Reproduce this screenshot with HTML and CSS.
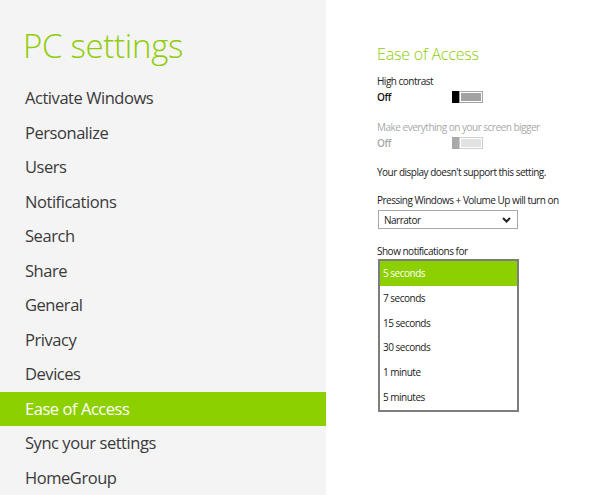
FILE: index.html
```html
<!DOCTYPE html>
<html>
<head>
<meta charset="utf-8">
<link rel="stylesheet" href="styles.css">
</head>
<body>
<div class="app">
  <aside class="side">
    <h1 class="title">PC settings</h1>
    <ul class="nav">
      <li>Activate Windows</li>
      <li>Personalize</li>
      <li>Users</li>
      <li>Notifications</li>
      <li>Search</li>
      <li>Share</li>
      <li>General</li>
      <li>Privacy</li>
      <li>Devices</li>
      <li class="active">Ease of Access</li>
      <li>Sync your settings</li>
      <li>HomeGroup</li>
    </ul>
  </aside>
  <main class="content">
    <h2 class="heading">Ease of Access</h2>
    <div class="label l-hc">High contrast</div>
    <div class="toggle-row">
      <span class="state">Off</span>
      <span class="toggle"><span class="thumb"></span><span class="track"></span></span>
    </div>
    <div class="label disabled l-big">Make everything on your screen bigger</div>
    <div class="toggle-row dis">
      <span class="state">Off</span>
      <span class="toggle"><span class="thumb"></span><span class="track"></span></span>
    </div>
    <div class="label l-note">Your display doesn't support this setting.</div>
    <div class="label l-press">Pressing Windows + Volume Up will turn on</div>
    <div class="select">
      <span>Narrator</span>
      <svg class="chev" width="9" height="6" viewBox="0 0 9 6"><polyline points="1,1 4.5,4.5 8,1" fill="none" stroke="#222" stroke-width="2"/></svg>
    </div>
    <div class="label l-show">Show notifications for</div>
    <ul class="list">
      <li class="sel">5 seconds</li>
      <li>7 seconds</li>
      <li>15 seconds</li>
      <li>30 seconds</li>
      <li>1 minute</li>
      <li>5 minutes</li>
    </ul>
  </main>
</div>
</body>
</html>
```
FILE: styles.css
```css
* { box-sizing: border-box; }
html, body { margin: 0; padding: 0; }
body {
  width: 600px;
  height: 495px;
  overflow: hidden;
  font-family: "Open Sans", "Noto Sans", sans-serif;
  background: #fff;
  color: #222;
}
.app { display: flex; height: 495px; }
.side {
  width: 326px;
  flex: none;
  background: #f4f4f4;
}
.title {
  margin: 0;
  padding: 26px 0 0 23px;
  height: 81px;
  font-size: 33px;
  font-weight: 300;
  line-height: 40px;
  color: #8ecd0a;
  letter-spacing: -0.3px;
}
.nav { list-style: none; margin: 0; padding: 0; }
.nav li {
  height: 34.5px;
  line-height: 34.5px;
  padding-left: 25px;
  font-size: 16.5px;
  font-weight: 400;
  color: #3a3a3a;
  letter-spacing: -0.45px;
}
.nav li.active { background: #8dd000; color: #fff; }
.content {
  flex: 1;
  padding: 44px 0 0 51px;
}
.heading {
  margin: 0;
  height: 20px;
  font-size: 16px;
  line-height: 20px;
  font-weight: 300;
  color: #8ecd0a;
  letter-spacing: -0.2px;
}
.label {
  font-size: 10px;
  line-height: 14px;
  height: 14px;
  color: #222;
  letter-spacing: -0.5px;
}
.label.disabled { color: #a8a8a8; }
.l-hc { margin-top: 10px; }
.l-big { margin-top: 16px; }
.l-note { margin-top: 15px; }
.l-press { margin-top: 14px; }
.l-show { margin-top: 16px; height: 13px; line-height: 13px; }
.toggle-row {
  margin-top: 2px;
  height: 14px;
  display: flex;
  align-items: center;
}
.state { width: 75px; font-size: 10px; font-weight: 600; color: #111; letter-spacing: -0.4px; }
.toggle { display: flex; width: 31px; height: 12px; }
.thumb { width: 7px; background: #000; }
.track {
  flex: 1;
  background: #a2a2a2;
  border: 1px solid #a2a2a2;
  box-shadow: inset 0 0 0 1px #fff;
}
.dis .state { color: #a8a8a8; }
.dis .thumb { background: #a9a9a9; }
.dis .track { background: #e2e2e2; border-color: #cfcfcf; }
.select {
  margin: 3px 0 0 1px;
  width: 140px;
  height: 19px;
  border: 1px solid #a8a8a8;
  display: flex;
  align-items: center;
  justify-content: space-between;
  padding: 0 6px 0 5px;
  font-size: 10px;
  letter-spacing: -0.5px;
}
.chev { display: block; }
.list {
  list-style: none;
  margin: 1px 0 0 1px;
  padding: 0;
  width: 141px;
  border: 2px solid #7d7d7d;
}
.list li {
  height: 24.8px;
  line-height: 24.8px;
  padding-left: 3px;
  font-size: 10px;
  color: #222;
  letter-spacing: -0.5px;
}
.list li.sel { background: #8dd000; color: #fff; }
```
